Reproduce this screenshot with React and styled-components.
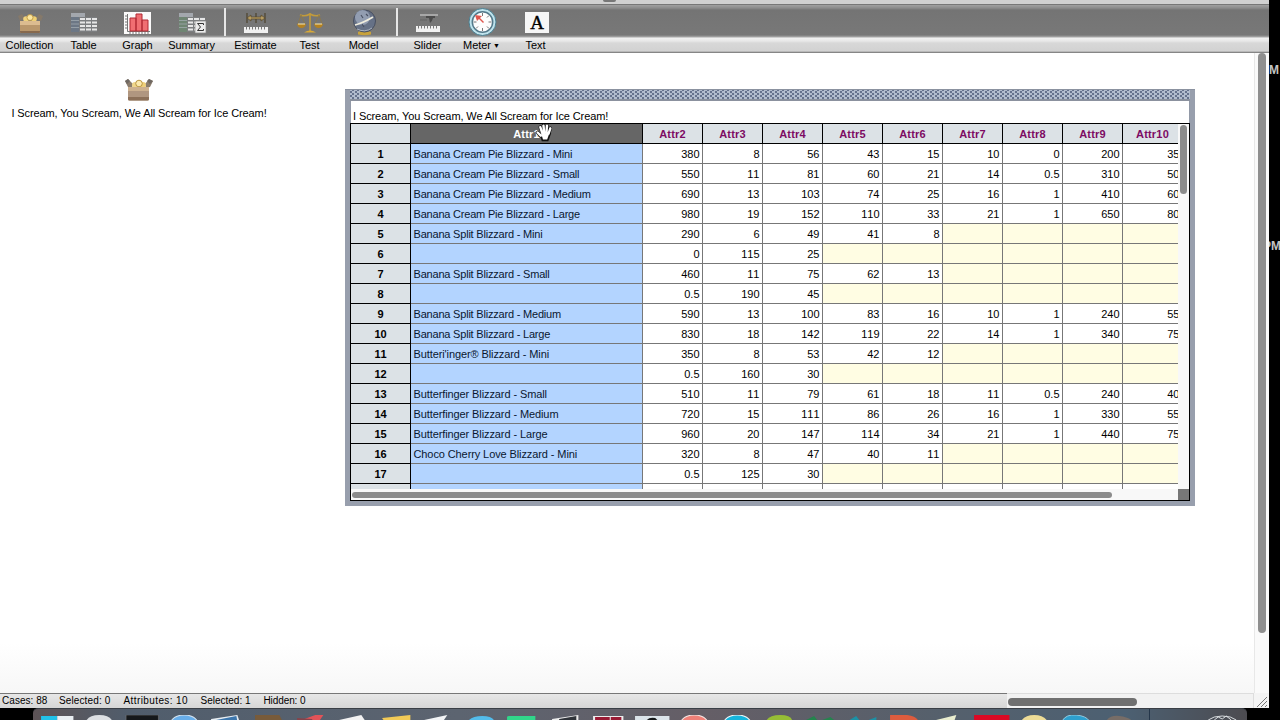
import React from 'react';
import styled, { createGlobalStyle } from 'styled-components';

const GlobalStyle = createGlobalStyle`
    * {
        box-sizing: border-box;
    }

    body {
        margin: 0;
        background: #000;
        font-family: 'Liberation Sans', Arial, sans-serif;
        overflow: hidden;
    }
`;

const Desktop = styled.div`
    position: relative;
    width: 1280px;
    height: 720px;
    background: #000;
    overflow: hidden;
`;

const AppWindow = styled.div`
    position: relative;
    display: flex;
    flex-direction: column;
    width: 1269px;
    height: 708px;
    background: #fff;
`;

const ClockText = styled.div`
    position: absolute;
    top: ${({ $top }) => $top}px;
    left: ${({ $left }) => $left}px;
    font: bold 12px/14px 'Liberation Sans', sans-serif;
    color: #c4c4c4;
    white-space: nowrap;
`;

/* Toolbar */

const TitleStrip = styled.div`
    display: flex;
    justify-content: center;
    flex: none;
    height: 5px;
    padding-right: 51px;
    background: #d0d0d0;
    border-bottom: 1px solid #777;
`;

const TitleIcon = styled.div`
    width: 13px;
    height: 2px;
    background: #777;
    border-radius: 0 0 3px 3px;
`;

const Toolbar = styled.div`
    display: flex;
    flex: none;
    height: 48px;
    padding-left: 2.5px;
    background: linear-gradient(
        #a0a0a0 0, #8c8c8c 3px, #747474 5px, #787878 30px,
        #a8a8a8 32px, #f2f2f2 33px, #e8e8e8 36px, #d8d8d8 38px, #d2d2d2 46px, #a0a0a0 47px, #6c6c6c 48px
    );
`;

const Tool = styled.div`
    display: flex;
    flex-direction: column;
    align-items: center;
    width: 54px;

    svg {
        display: block;
        width: 32px;
        height: 32px;
        margin-top: 1px;
    }
`;

const ToolLabel = styled.div`
    height: 14px;
    font-size: 11px;
    line-height: 14px;
    letter-spacing: -0.05px;
    color: #000;
    white-space: nowrap;

    small {
        margin-left: 2px;
        font-size: 7px;
        vertical-align: 1px;
    }
`;

const ToolDivider = styled.div`
    width: 2px;
    height: 28px;
    margin: 3px 2.5px 0 5.5px;
    background: #e6e6e6;
`;

/* Canvas */

const Main = styled.div`
    display: flex;
    flex: 1;
    min-height: 0;
`;

const Canvas = styled.div`
    position: relative;
    flex: 1;
    background: linear-gradient(#fff 590px, #f7f7f7 640px);
`;

const MainScroll = styled.div`
    width: 15px;
    padding: 0 3px 0 3px;
    background: #fafafa;
    border-left: 1px solid #e8e8e8;
`;

const MainThumb = styled.div`
    width: 8px;
    height: 580px;
    border-radius: 4px;
    background: #8f8f8f;
`;

const CollectionItem = styled.div`
    position: absolute;
    left: 11px;
    top: 25px;
    display: flex;
    flex-direction: column;
    align-items: center;
    gap: 3px;
    width: 256px;

    svg {
        width: 28px;
        height: 24px;
    }
`;

const CollectionName = styled.div`
    height: 16px;
    font-size: 11px;
    line-height: 16px;
    letter-spacing: -0.1px;
    white-space: nowrap;
`;

/* Case table */

const TableFrame = styled.div`
    position: absolute;
    left: 345px;
    top: 36px;
    display: flex;
    flex-direction: column;
    width: 850px;
    height: 417px;
    padding: 0 5px 5px;
    background: #989fad;
    border-top: 1px solid #8b92a0;
`;

const DragBar = styled.div`
    flex: none;
    height: 11px;
    background:
        radial-gradient(circle at 1px 1px, #65708c 0.7px, transparent 1.2px) 0 1px / 5px 4px,
        radial-gradient(circle at 1px 1px, #65708c 0.7px, transparent 1.2px) 2px 3px / 5px 4px,
        #b2bbcd;
    border-bottom: 2px solid #8b919e;
`;

const TableBody = styled.div`
    display: flex;
    flex-direction: column;
    flex: 1;
    min-height: 0;
    background: #fff;
    border: 1px solid #000;
    border-top: 0;
`;

const TableTitle = styled.div`
    flex: none;
    height: 22px;
    margin: 0 -1px;
    padding: 8px 0 0 2px;
    font-size: 11px;
    line-height: 15px;
    letter-spacing: -0.1px;
    white-space: nowrap;
    border: 1px solid #9299a7;
    border-width: 0 1px;
`;

const TableMain = styled.div`
    display: flex;
    height: 366px;
    border-top: 1px solid #000;
`;

const Grid = styled.div`
    width: 827px;
    overflow: hidden;
`;

const Row = styled.div`
    display: grid;
    grid-template-columns: 60px 232px repeat(9, 60px);
    grid-template-rows: 20px;
    width: 832px;
    height: 20px;
`;

const Cell = styled.div`
    padding-right: 2.5px;
    font-size: 11px;
    font-kerning: none;
    line-height: 20px;
    text-align: right;
    white-space: nowrap;
    background: ${({ $blank }) => ($blank ? '#fffde3' : '#fff')};
    border-right: 1px solid #777;
    border-bottom: 1px solid #777;
`;

const NameCell = styled(Cell)`
    padding: 0 0 0 2.5px;
    text-align: left;
    letter-spacing: ${({ $spacing }) => $spacing || -0.2}px;
    color: #0a1730;
    background: #b3d4ff;
`;

const RowHead = styled(Cell)`
    padding: 0;
    text-align: center;
    font-weight: bold;
    background: #dce2e6;
    border-color: #000;
`;

const ColumnHead = styled(RowHead)`
    letter-spacing: 0.2px;
    color: ${({ $selected }) => ($selected ? '#fff' : '#7d0a63')};
    background: ${({ $selected }) => ($selected ? '#666' : '#dce2e6')};
`;

const VScroll = styled.div`
    width: 11px;
    padding: 1px 2px;
    background: #f8f8f8;
`;

const VThumb = styled.div`
    width: 7px;
    height: 69px;
    border-radius: 4px;
    background: #8b8b8b;
`;

const HScroll = styled.div`
    display: flex;
    align-items: center;
    justify-content: space-between;
    height: 11px;
    padding-left: 1px;
    background: #f8f8f8;
`;

const HThumb = styled.div`
    width: 760px;
    height: 6px;
    border-radius: 3px;
    background: #8b8b8b;
`;

const GrowBox = styled.div`
    width: 11px;
    height: 11px;
    background: #777;
`;

const Hand = styled.svg`
    position: absolute;
    left: 535px;
    top: 70px;
    width: 18px;
    height: 19px;
`;

/* Status bar */

const StatusBar = styled.div`
    display: flex;
    flex: none;
    height: 15px;
    background: linear-gradient(#e8e8e8, #d6d6d6);
`;

const StatusTexts = styled.div`
    display: flex;
    width: 1007px;
    padding-left: 2px;
    font-size: 10px;
    line-height: 14px;
    border-top: 1px solid #777;
`;

const StatusText = styled.div`
    width: ${({ $width }) => $width}px;
    letter-spacing: ${({ $spacing }) => $spacing}px;
    white-space: nowrap;
`;

const StatusScroll = styled.div`
    width: 247px;
    padding: 4px 0 0 1px;
    background: #f2f2f2;
    border-top: 1px solid #ddd;
    border-right: 1px solid #ddd;
`;

const StatusThumb = styled.div`
    width: 129px;
    height: 8px;
    border-radius: 4px;
    background: #707070;
`;

/* Dock */

const Dock = styled.div`
    display: flex;
    width: 1214px;
    height: 12px;
    margin-left: 33px;
    padding: 6px 0 0 3px;
    background: linear-gradient(90deg, #5d5356, #505d6c 8%, #5c6470 35%, #655e66 55%, #55606c 75%, #4c6072 90%, #4c4b50);
    border-top: 1px solid #3a3f46;
    border-radius: 5px 5px 0 0;
`;

const DockIcon = styled.svg`
    flex: none;
    width: 42.48px;
    height: 5px;
`;

const DockDivider = styled.div`
    width: 1px;
    height: 12px;
    margin: -6px 51px 0 9px;
    background: #24364a;
`;

const BoxIcon = () => (
    <svg viewBox="0 0 28 24">
        <path d="M3 9L0 3l3-2 5 5-1 4zM25 9l3-6-4-2-4 5 1 4z" fill="#8a7c6d" />
        <path d="M0 3l3-2 2 2-3 3zM28 3l-4-2-2 2 3 3z" fill="#6f6862" />
        <circle cx="10" cy="7" r="3" fill="#f0d68a" />
        <circle cx="18" cy="7" r="3" fill="#efd07a" />
        <circle cx="14" cy="5.500" r="3.300" fill="#fbe9ae" stroke="#b28b35" strokeWidth=".9" />
        <path d="M3 9h21v12q0 1.500-1.500 1.500h-18Q3 22.500 3 21z" fill="#b09680" />
        <path d="M3 9h21v4H3z" fill="#cdb190" />
        <path d="M3 19h21v2q0 1.500-1.500 1.500h-18Q3 22.500 3 21z" fill="#8c7059" />
    </svg>
);

const CollectionIcon = () => (
    <svg viewBox="0 0 32 32">
        <path d="M6 15l-2-5 4-2 3 4zM27 15l2-5-4-2-3 4z" fill="#85796a" />
        <circle cx="12" cy="13" r="2.8" fill="#f0d27c" />
        <circle cx="20" cy="13" r="2.8" fill="#efcf73" />
        <circle cx="16" cy="11.500" r="3" fill="#fbe6a0" stroke="#b99038" strokeWidth=".8" />
        <path d="M6 15h20v11q0 1-1 1H7q-1 0-1-1z" fill="#b9976c" />
        <path d="M6 15h20v4H6z" fill="#dcbc90" />
        <path d="M6 25h20v1q0 1-1 1H7q-1 0-1-1z" fill="#87694d" />
    </svg>
);

const SheetDrawing = ({ head }) => (
    <>
        <path d="M3 7h14v4H3z" fill="#a3a7ad" />
        <path d="M3 11h8v15H3z" fill={head} />
        <path d="M11 11h18v15H11z" fill="#7c7e80" />
        <path d="M3 14.500h8M3 18h8M3 21.500h8" stroke="#a8b0b6" strokeWidth=".7" />
        <path
            d="M12 13h5M18 13h5M24 13h5M12 16.500h5M18 16.500h5M24 16.500h5M12 20h5M18 20h5M24 20h5M12 23.500h5M18 23.500h5M24 23.500h5"
            stroke="#e6e6e6"
            strokeWidth="2"
        />
    </>
);

const TableIcon = () => (
    <svg viewBox="0 0 32 32">
        <SheetDrawing head="#6c7785" />
    </svg>
);

const SummaryIcon = () => (
    <svg viewBox="0 0 32 32">
        <SheetDrawing head="#6f8573" />
        <path d="M19 15h11v12H19z" fill="#ececec" stroke="#888" strokeWidth=".7" />
        <path d="M27.500 19v-1.500h-6l3 3.500-3 3.500h6V23" fill="none" stroke="#333" />
    </svg>
);

const GraphIcon = () => (
    <svg viewBox="0 0 32 32">
        <path d="M2 6h27v22H2z" fill="#fbfafa" />
        <path d="M5.500 8v17.500H28M3 10h2M3 13h2M3 16h2M3 19h2M3 22h2M8 26v2M11 26v2M14 26v2M17 26v2M20 26v2M23 26v2M26 26v2" fill="none" stroke="#555" strokeWidth=".8" />
        <path d="M8 12h6v13H8zM14 8h6v17h-6zM20 14h6v11h-6z" fill="#f06e72" stroke="#b12933" />
    </svg>
);

const Ruler = ({ y }) => (
    <>
        <path d={`M4 ${y}h24v6H4z`} fill="#f1f1f1" />
        <path d={`M6.500 ${y}v2.500M9.500 ${y}v2.500M12.500 ${y}v2.500M15.500 ${y}v2.500M18.500 ${y}v2.500M21.500 ${y}v2.500M24.500 ${y}v2.500`} stroke="#777" />
    </>
);

const EstimateIcon = () => (
    <svg viewBox="0 0 32 32">
        <path d="M7 7v10M16 7v10M25 7v10" stroke="#4d432d" strokeWidth="1.200" />
        <path d="M7 12l4-3v2h10V9l4 3-4 3v-2H11v2z" fill="#b59b61" stroke="#544629" strokeWidth=".7" />
        <Ruler y={21} />
    </svg>
);

const TestIcon = () => (
    <svg viewBox="0 0 32 32">
        <path d="M16 7v18M6 9q5 2 10-1 5 3 10 1" fill="none" stroke="#c29b3b" strokeWidth="1.600" />
        <path d="M7 9L4 18M7 9l4 9M25 9l-4 9M25 9l3 9" fill="none" stroke="#8e7846" strokeWidth=".8" />
        <path d="M3 18h9q-1 4-4.500 4T3 18zM20 18h9q-1 4-4.500 4T20 18z" fill="#b58220" />
        <path d="M4 18h7M21 18h7" stroke="#f7e6ad" />
        <path d="M10 26.500q6-4 12 0z" fill="#d8a937" />
    </svg>
);

const ModelIcon = () => (
    <svg viewBox="0 0 32 32">
        <path d="M10 26q6-4 13 0v2.500q-6 1.500-13 0z" fill="#c8a23b" />
        <circle cx="16.500" cy="15" r="11" fill="#667186" stroke="#484f60" />
        <circle cx="14.500" cy="11.500" r="7.500" fill="#929db1" />
        <path d="M7 19q8-2 18-8" fill="none" stroke="#f0edde" strokeWidth="1.800" />
        <path d="M13 9l2 3M18 8l2 2M14 18l2 3" fill="none" stroke="#4b5264" strokeWidth="1.200" />
        <path d="M9 23q8 4 15-1" fill="none" stroke="#aab2be" />
    </svg>
);

const SliderIcon = () => (
    <svg viewBox="0 0 32 32">
        <path d="M8 8h18v2H8z" fill="#a7a7a7" />
        <path d="M14 10h9v2h-2q-1 4-3 5l-1-5h-3z" fill="#4b4b4b" />
        <path d="M8 14h7" stroke="#626262" />
        <Ruler y={20} />
    </svg>
);

const MeterIcon = () => (
    <svg viewBox="0 0 32 32">
        <circle cx="16.500" cy="16" r="13.500" fill="#bfe3ec" stroke="#4b7f91" />
        <circle cx="16.500" cy="16" r="10.200" fill="#fdfdfd" stroke="#53798a" strokeWidth="1.500" />
        <path d="M16.500 7v3M16.500 22v3M7.500 16h3M22.500 16h3M23 9.500l-2 2M10 22.500l2-2M23 22.500l-2-2" stroke="#777" />
        <path d="M9 9l2 6 2-2 4 4 1-1-4-4 2-2z" fill="#e0574e" />
    </svg>
);

const TextIcon = () => (
    <svg viewBox="0 0 32 32">
        <path d="M5 6h24v21H5z" fill="#f6f6f6" />
        <text x="17" y="22.500" textAnchor="middle" fontFamily="Liberation Serif, serif" fontSize="19" stroke="#000" strokeWidth=".4">A</text>
    </svg>
);

const toolGroups = [
    [
        { label: 'Collection', Icon: CollectionIcon },
        { label: 'Table', Icon: TableIcon },
        { label: 'Graph', Icon: GraphIcon },
        { label: 'Summary', Icon: SummaryIcon },
    ],
    [
        { label: 'Estimate', Icon: EstimateIcon },
        { label: 'Test', Icon: TestIcon },
        { label: 'Model', Icon: ModelIcon },
    ],
    [
        { label: 'Slider', Icon: SliderIcon },
        { label: 'Meter', Icon: MeterIcon, menu: true },
        { label: 'Text', Icon: TextIcon },
    ],
];

const columns = ['Attr2', 'Attr3', 'Attr4', 'Attr5', 'Attr6', 'Attr7', 'Attr8', 'Attr9', 'Attr10'];

const cases = [
    ['Banana Cream Pie Blizzard - Mini', 380, 8, 56, 43, 15, 10, 0, 200, 35],
    ['Banana Cream Pie Blizzard - Small', 550, 11, 81, 60, 21, 14, 0.5, 310, 50],
    ['Banana Cream Pie Blizzard - Medium', 690, 13, 103, 74, 25, 16, 1, 410, 60],
    ['Banana Cream Pie Blizzard - Large', 980, 19, 152, 110, 33, 21, 1, 650, 80],
    ['Banana Split Blizzard - Mini', 290, 6, 49, 41, 8],
    ['', 0, 115, 25],
    ['Banana Split Blizzard - Small', 460, 11, 75, 62, 13],
    ['', 0.5, 190, 45],
    ['Banana Split Blizzard - Medium', 590, 13, 100, 83, 16, 10, 1, 240, 55],
    ['Banana Split Blizzard - Large', 830, 18, 142, 119, 22, 14, 1, 340, 75],
    ["Butteri'inger® Blizzard - Mini", 350, 8, 53, 42, 12],
    ['', 0.5, 160, 30],
    ['Butterfinger Blizzard - Small', 510, 11, 79, 61, 18, 11, 0.5, 240, 40],
    ['Butterfinger Blizzard - Medium', 720, 15, 111, 86, 26, 16, 1, 330, 55],
    ['Butterfinger Blizzard - Large', 960, 20, 147, 114, 34, 21, 1, 440, 75],
    ['Choco Cherry Love Blizzard - Mini', 320, 8, 47, 40, 11],
    ['', 0.5, 125, 30],
];

const statusItems = [
    { text: 'Cases: 88', width: 57, spacing: 0.05 },
    { text: 'Selected: 0', width: 64.5, spacing: 0.12 },
    { text: 'Attributes: 10', width: 77, spacing: 0.4 },
    { text: 'Selected: 1', width: 63, spacing: 0 },
    { text: 'Hidden: 0', width: 60, spacing: -0.1 },
];

const dockIcons = [
    <><path d="M5 1h16v5H5z" fill="#22c1e8" /><path d="M21 1h16v5H21z" fill="#e9eef2" /></>,
    <path d="M8 6q3-6 13-6t13 6z" fill="#dcdfe3" />,
    <path d="M5 0h32v6H5z" fill="#15181b" stroke="#777" strokeWidth=".6" />,
    <path d="M8 6q4-6 13-6t13 6z" fill="#68aeea" stroke="#d5e3ef" />,
    <><path d="M5 4l26-4 2 6H5z" fill="#e7edf2" /><path d="M10 5l20-4 1 5H10z" fill="#3e77ad" /></>,
    <path d="M7 0h24l3 6H7z" fill="#785b3a" />,
    <><path d="M8 6l16-6h8l-4 6z" fill="#e25358" /><path d="M6 3l15 1v2H6z" fill="#86434b" /></>,
    <path d="M6 5L28 0l4 6H8z" fill="#f2f2f2" />,
    <path d="M6 3L34 0v6H8z" fill="#f2ca57" />,
    <path d="M6 5L29 0l-4 6H9z" fill="#f2f4f6" />,
    <path d="M7 6q4-5 14-5t12 5z" fill="#53bceb" />,
    <path d="M4 2q0-1 2-1h26v5H4z" fill="#31d68a" />,
    <><path d="M6 4l26-4v6H6z" fill="#ececec" /><path d="M13 4l17-3v5H13z" fill="#30343a" /></>,
    <><path d="M5 1h30v5H5z" fill="#ececec" /><path d="M7 2h26v4H7z" fill="#9a1b35" /><path d="M22 2v4" stroke="#eee" /></>,
    <><path d="M4 1h34v5H4z" fill="#dbe3e9" /><path d="M15 6q2-4 9-3l3 3z" fill="#15181a" /></>,
    <path d="M8 6q4-6 13-6t13 6z" fill="#f08078" stroke="#f4e6e3" />,
    <path d="M8 6q4-6 13-6t13 6z" fill="#16b4dc" stroke="#eff7f9" />,
    <path d="M8 6q3-6 14-6t12 6z" fill="#96bd35" />,
    <path d="M6 5l8-4 3 4zM22 5l8-3 5 4z" fill="#24844d" />,
    <path d="M5 6l8-5 4 5zM23 6l10-4v4z" fill="#1c91a6" />,
    <path d="M5 0h17q9 1 11 6H5z" fill="#dd5c3e" />,
    <path d="M8 5L28 0l-2 6H9z" fill="#e9edcf" />,
    <path d="M4 0h35v6H4z" fill="#dc0924" />,
    <path d="M8 6q4-6 13-6t13 6z" fill="#ecdb96" />,
    <path d="M7 6q4-7 14-6t13 6z" fill="#2e9fce" stroke="#a8d9eb" strokeWidth=".8" />,
    <path d="M8 6q4-6 13-5t13 5z" fill="#776d67" />,
];

const App = () => (
    <>
        <GlobalStyle />
        <Desktop>
            <ClockText $top={63} $left={1269}>M</ClockText>
            <ClockText $top={239} $left={1263}>PM</ClockText>

            <AppWindow>
                <TitleStrip>
                    <TitleIcon />
                </TitleStrip>
                <Toolbar>
                    {toolGroups.map((group, i) => (
                        <React.Fragment key={i}>
                            {i > 0 && <ToolDivider />}
                            {group.map(({ label, Icon, menu }) => (
                                <Tool key={label}>
                                    <Icon />
                                    <ToolLabel>
                                        {label}
                                        {menu && <small>▼</small>}
                                    </ToolLabel>
                                </Tool>
                            ))}
                        </React.Fragment>
                    ))}
                </Toolbar>

                <Main>
                    <Canvas>
                        <CollectionItem>
                            <BoxIcon />
                            <CollectionName>I Scream, You Scream, We All Scream for Ice Cream!</CollectionName>
                        </CollectionItem>

                        <TableFrame>
                            <DragBar />
                            <TableBody>
                                <TableTitle>I Scream, You Scream, We All Scream for Ice Cream!</TableTitle>
                                <TableMain>
                                    <Grid>
                                        <Row>
                                            <ColumnHead />
                                            <ColumnHead $selected>Attr1</ColumnHead>
                                            {columns.map((name) => (
                                                <ColumnHead key={name}>{name}</ColumnHead>
                                            ))}
                                        </Row>
                                        {cases.map(([name, ...values], i) => (
                                            <Row key={i}>
                                                <RowHead>{i + 1}</RowHead>
                                                <NameCell $spacing={name.startsWith('Banana') ? -0.2 : -0.1}>{name}</NameCell>
                                                {columns.map((column, j) => (
                                                    <Cell key={column} $blank={values[j] === undefined}>
                                                        {values[j]}
                                                    </Cell>
                                                ))}
                                            </Row>
                                        ))}
                                        <Row>
                                            <RowHead />
                                            <NameCell />
                                            {columns.map((column) => (
                                                <Cell key={column} />
                                            ))}
                                        </Row>
                                    </Grid>
                                    <VScroll>
                                        <VThumb />
                                    </VScroll>
                                </TableMain>
                                <HScroll>
                                    <HThumb />
                                    <GrowBox />
                                </HScroll>
                            </TableBody>
                        </TableFrame>

                        <Hand viewBox="0 0 17 18">
                            <g strokeLinecap="round" strokeLinejoin="round" fill="none">
                                <path d="M2.500 9l3 3M5 4l2 5M8 2.500l.7 6M11.300 2.500l-.5 6M14.500 5l-1.500 5" stroke="#111" strokeWidth="3.400" />
                                <path d="M5 10l8-1.500 1.500 1-2.500 7H7z" stroke="#111" strokeWidth="1.600" fill="#fff" />
                                <path d="M2.500 9l3 3M5 4l2 6M8 2.500l.7 7M11.300 2.500l-.5 7M14.500 5l-1.700 5" stroke="#fff" strokeWidth="2.300" />
                            </g>
                        </Hand>
                    </Canvas>
                    <MainScroll>
                        <MainThumb />
                    </MainScroll>
                </Main>

                <StatusBar>
                    <StatusTexts>
                        {statusItems.map(({ text, width, spacing }, i) => (
                            <StatusText key={i} $width={width} $spacing={spacing}>{text}</StatusText>
                        ))}
                    </StatusTexts>
                    <StatusScroll>
                        <StatusThumb />
                    </StatusScroll>
                    <svg width="15" height="15" viewBox="0 0 15 15">
                        <path d="M0 0h15v15H0z" fill="#f4f4f4" />
                        <path d="M3 14L13 4M7 14l6-6M11 14l2-2" stroke="#777" />
                    </svg>
                </StatusBar>
            </AppWindow>

            <Dock>
                {dockIcons.map((icon, i) => (
                    <DockIcon key={i} viewBox="0 0 42 5" preserveAspectRatio="none">{icon}</DockIcon>
                ))}
                <DockDivider />
                <DockIcon viewBox="0 0 42 5">
                    <path d="M7 5q5-4 14-4t14 4M13 5l4-3 4 2 4-3 5 4" fill="none" stroke="#d9dde0" />
                </DockIcon>
            </Dock>
        </Desktop>
    </>
);

export default App;
